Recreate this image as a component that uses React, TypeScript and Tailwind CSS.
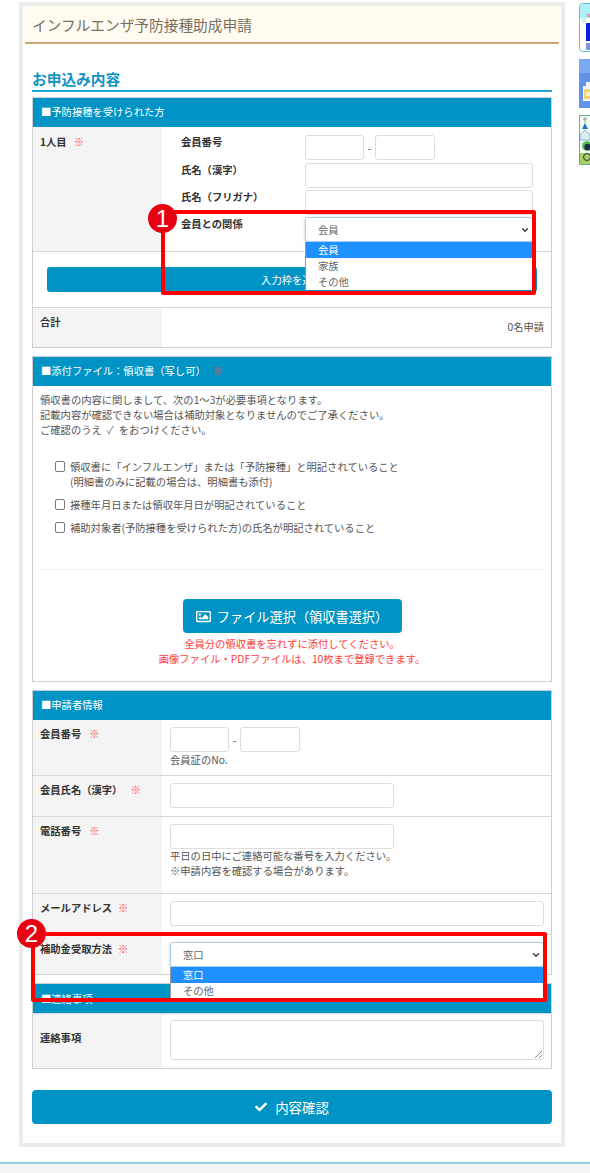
import { ReactNode } from "react";
import { ChevronDown } from "lucide-react";
import { FaCheck, FaRegImage } from "react-icons/fa";

const Req = ({ className = "ml-2" }: { className?: string }) => (
  <span className={`${className} font-normal text-[#ff3f3f]`}>※</span>
);

function SectionHeader({ children }: { children: ReactNode }) {
  return (
    <div className="h-[29px] bg-[#0094c6] pl-[8px] pt-[6px] text-[10.3px] leading-[15px] text-white">
      {children}
    </div>
  );
}

function TextBox({ className }: { className: string }) {
  return <div className={`h-[25px] rounded-[3px] border border-[#ddd] bg-white ${className}`}></div>;
}

function Row({
  label,
  height,
  children,
}: {
  label: ReactNode;
  height: string;
  children: ReactNode;
}) {
  return (
    <div className={`flex border-t border-[#d8d8d8] ${height}`}>
      <div className="w-[129px] shrink-0 bg-[#f4f4f4] pl-[7px] pt-[6px] text-[10.3px] font-bold leading-[15px] text-[#333]">
        {label}
      </div>
      <div className="flex-1 pl-[8px] pr-[7px] pt-[7px]">{children}</div>
    </div>
  );
}

function MemberNo() {
  return (
    <div className="flex items-center">
      <TextBox className="w-[59px]" />
      <span className="w-[11px] text-center text-[10.3px]">-</span>
      <TextBox className="w-[60px]" />
    </div>
  );
}

function FakeSelect({ value, options, width }: { value: string; options: string[]; width: string }) {
  return (
    <div className={`relative ${width}`}>
      <div className="flex h-[25px] items-center justify-between rounded-[3px] border border-[#a9cdeb] bg-white pl-[12px] pr-[2px] text-[10.3px] text-[#666] shadow-[0_1px_3px_rgba(0,0,0,0.25)]">
        {value}
        <ChevronDown size={10} strokeWidth={3} className="text-[#333]" />
      </div>
      <div className="absolute left-0 right-0 top-[25px] z-10 border-x border-[#999] bg-white text-[10.3px] leading-[16px] text-[#666]">
        {options.map((o, i) => (
          <div key={o} className={i == 0 ? "bg-[#1e90ff] pl-[12px] text-white" : "pl-[12px]"}>
            {o}
          </div>
        ))}
      </div>
    </div>
  );
}

function MemberRow({ label, children, className }: { label: string; children: ReactNode; className?: string }) {
  return (
    <div className={`flex items-start ${className}`}>
      <div className="-mt-[1px] w-[124px] shrink-0 text-[10.3px] font-bold leading-[15px] text-[#333]">{label}</div>
      {children}
    </div>
  );
}

function Check({ children, className }: { children: ReactNode; className?: string }) {
  return (
    <div className={`flex items-start ${className}`}>
      <span className="mr-[5px] mt-[2px] h-[11px] w-[10px] shrink-0 rounded-[2px] border border-[#777] bg-white"></span>
      <div>{children}</div>
    </div>
  );
}

function Banners() {
  return (
    <aside className="ml-[14px] mt-[3px] flex w-[11px] shrink-0 flex-col gap-[7px]">
      <svg width="11" height="49" viewBox="0 0 11 49" className="block">
        <rect x="0.5" y="0.5" width="20" height="48" rx="3" fill="#fff" stroke="#5bbce0" />
        <path d="M1 3a2 2 0 0 1 2-2h8v14H1z" fill="#aeeef5" />
        <path d="M2 17l5-1M3 19l4-1" stroke="#7fd0ea" strokeWidth="0.8" />
        <rect x="8" y="11" width="3" height="3" fill="#f48fb8" />
        <rect x="7" y="20" width="4" height="18" fill="#0a22d8" />
        <rect x="7" y="40" width="4" height="7" fill="#7c94dc" />
      </svg>
      <svg width="11" height="49" viewBox="0 0 11 49" className="block">
        <rect width="11" height="49" fill="#5f94e8" />
        <rect width="11" height="14" fill="#7ba8ee" />
        <path d="M4 27h3v-4h4v19H4z" fill="#f4f6fb" />
        <rect x="5" y="30" width="6" height="10" rx="1" fill="#f3d36b" />
        <rect x="7" y="33" width="4" height="4" fill="#fdf3c4" />
      </svg>
      <svg width="11" height="50" viewBox="0 0 11 50" className="block">
        <rect x="0.5" y="0.5" width="20" height="49" fill="#f4faf0" stroke="#62b488" />
        <path d="M6 2v6M4 4h4" stroke="#9b9b9b" />
        <path d="M6 8l3 6H3z" fill="#1d74c8" />
        <path d="M1 20l5-5 5 5v5H1z" fill="#d8edf8" stroke="#4a8fc0" strokeWidth="0.6" />
        <rect x="1" y="38" width="10" height="11" fill="#a5cf63" />
        <circle cx="8" cy="31" r="5" fill="#4ec25a" />
        <circle cx="8.5" cy="32" r="3.2" fill="#232a4f" />
        <circle cx="8" cy="42" r="3.5" fill="none" stroke="#333" />
      </svg>
    </aside>
  );
}

export default function App() {
  return (
    <div className="relative flex h-[1173px] w-[590px] flex-col overflow-hidden bg-white font-['Noto_Sans_CJK_JP',sans-serif] text-[10.3px] leading-[15px] text-[#555]">
      <div className="flex items-start">
        <div className="ml-[19px] mt-[2px] h-[1145px] w-[546px] shrink-0 border-4 border-[#ececec]">
          <div className="mx-[2px] flex h-[38px] items-center border-b-2 border-[#c9a873] bg-[#fffbf0] pl-[7px] text-[14.7px] text-[#776f60]">
            インフルエンザ予防接種助成申請
          </div>
          <div className="mx-[9px]">
            <h2 className="mt-[26px] h-[22px] border-b-2 border-[#1ea7d7] text-[14.7px] font-bold leading-[17px] text-[#0e94c4]">
              お申込み内容
            </h2>

            <section className="mt-[5px] border border-[#cfcfcf]">
              <SectionHeader>■予防接種を受けられた方</SectionHeader>
              <div className="flex h-[124px]">
                <div className="w-[129px] shrink-0 bg-[#f4f4f4] pl-[7px] pt-[7px] font-bold text-[#333]">
                  1人目
                  <Req className="ml-[7px]" />
                </div>
                <div className="flex flex-1 flex-col gap-[2px] pl-[19px] pt-[8px]">
                  <MemberRow label="会員番号" className="mb-[1px]">
                    <MemberNo />
                  </MemberRow>
                  <MemberRow label="氏名（漢字）">
                    <TextBox className="w-[228px]" />
                  </MemberRow>
                  <MemberRow label="氏名（フリガナ）">
                    <TextBox className="w-[228px]" />
                  </MemberRow>
                  <MemberRow label="会員との関係">
                    <FakeSelect value="会員" options={["会員", "家族", "その他"]} width="w-[228px]" />
                  </MemberRow>
                </div>
              </div>
              <div className="h-[56px] border-t border-[#d8d8d8] px-[14px] pt-[15px]">
                <div className="flex h-[25px] items-center justify-center rounded-[3px] bg-[#0094c6] text-[10.3px] text-white">
                  入力枠を追加
                </div>
              </div>
              <div className="flex h-[40px] border-t border-[#d8d8d8]">
                <div className="w-[129px] shrink-0 bg-[#f4f4f4] pl-[7px] pt-[6px] font-bold text-[#333]">合計</div>
                <div className="flex-1 pr-[7px] pt-[11px] text-right">0名申請</div>
              </div>
            </section>

            <section className="mt-[8px] h-[326px] border border-[#cfcfcf]">
              <SectionHeader>
                ■添付ファイル：領収書（写し可）
                <Req className="ml-[7px]" />
              </SectionHeader>
              <div className="px-[7px] pt-[6px]">
                <p>
                  領収書の内容に関しまして、次の1～3が必要事項となります。
                  <br />
                  記載内容が確認できない場合は補助対象となりませんのでご了承ください。
                  <br />
                  ご確認のうえ<span className="mx-[5px] text-[#777]">✓</span>をおつけください。
                </p>
                <div className="ml-[15px] mt-[22px]">
                  <Check>
                    領収書に「インフルエンザ」または「予防接種」と明記されていること
                    <br />
                    (明細書のみに記載の場合は、明細書も添付)
                  </Check>
                  <Check className="mt-[8px]">接種年月日または領収年月日が明記されていること</Check>
                  <Check className="mt-[8px]">補助対象者(予防接種を受けられた方)の氏名が明記されていること</Check>
                </div>
                <div className="mt-[34px] border-t border-[#eee]"></div>
                <div className="mx-auto mt-[29px] flex h-[34px] w-[219px] items-center justify-center gap-[6px] rounded-[4px] bg-[#0094c6] text-[13.2px] text-white">
                  <FaRegImage size={15} />
                  ファイル選択（領収書選択）
                </div>
                <p className="mt-[3px] text-center text-[#ff3b3b]">
                  全員分の領収書を忘れずに添付してください。
                  <br />
                  画像ファイル・PDFファイルは、10枚まで登録できます。
                </p>
              </div>
            </section>

            <section className="mt-[8px] border border-[#cfcfcf]">
              <SectionHeader>■申請者情報</SectionHeader>
              <div className="flex h-[55px]">
                <div className="w-[129px] shrink-0 bg-[#f4f4f4] pl-[7px] pt-[6px] font-bold text-[#333]">
                  会員番号
                  <Req />
                </div>
                <div className="flex-1 pl-[8px] pr-[7px] pt-[7px]">
                  <MemberNo />
                  <p>会員証のNo.</p>
                </div>
              </div>
              <Row
                height="h-[41px]"
                label={
                  <>
                    会員氏名（漢字）
                    <Req />
                  </>
                }
              >
                <TextBox className="w-[224px]" />
              </Row>
              <Row
                height="h-[77px]"
                label={
                  <>
                    電話番号
                    <Req />
                  </>
                }
              >
                <TextBox className="w-[224px]" />
                <p className="-mt-[1px]">
                  平日の日中にご連絡可能な番号を入力ください。
                  <br />
                  ※申請内容を確認する場合があります。
                </p>
              </Row>
              <Row
                height="h-[41px]"
                label={
                  <>
                    メールアドレス
                    <Req className="ml-[6px]" />
                  </>
                }
              >
                <TextBox className="w-[374px]" />
              </Row>
              <Row
                height="h-[40px]"
                label={
                  <>
                    補助金受取方法
                    <Req className="ml-[6px]" />
                  </>
                }
              >
                <FakeSelect value="窓口" options={["窓口", "その他"]} width="w-[374px]" />
              </Row>
            </section>

            <section className="mt-[8px] border border-[#cfcfcf]">
              <SectionHeader>
                <div className="h-[3px] pt-[1px]">■連絡事項</div>
              </SectionHeader>
              <Row height="h-[55px]" label={<div className="pt-[10px]">連絡事項</div>}>
                <div className="relative -mt-[1px] h-[40px] w-[374px] rounded-[3px] border border-[#ddd] bg-white">
                  <svg width="9" height="9" viewBox="0 0 9 9" className="absolute bottom-0 right-0">
                    <path d="M1 8l7-7M5 8l3-3" stroke="#888" strokeWidth="1" />
                  </svg>
                </div>
              </Row>
            </section>

            <div className="mt-[21px] flex h-[34px] items-center justify-center gap-[8px] rounded-[4px] bg-[#0094c6] text-[13.4px] text-white">
              <FaCheck size={12} />
              内容確認
            </div>
          </div>
        </div>
        <Banners />
      </div>

      <div className="mt-auto h-[11px] border-t-2 border-[#8fd3e3] bg-[#f5f5f5]"></div>

      {/* 赤枠の注釈 */}
      <div className="absolute left-[161px] top-[210px] z-20 h-[85px] w-[375px] rounded-[2px] border-4 border-[#f00]"></div>
      <div className="absolute left-[148px] top-[204px] z-30 flex h-[29px] w-[29px] items-center justify-center rounded-full bg-[#e60012] font-['Liberation_Sans',sans-serif] text-[24px] text-white">
        1
      </div>
      <div className="absolute left-[31px] top-[932px] z-20 h-[70px] w-[516px] rounded-[2px] border-4 border-[#f00]"></div>
      <div className="absolute left-[17px] top-[919px] z-30 flex h-[29px] w-[29px] items-center justify-center rounded-full bg-[#e60012] font-['Liberation_Sans',sans-serif] text-[24px] text-white">
        2
      </div>
    </div>
  );
}
